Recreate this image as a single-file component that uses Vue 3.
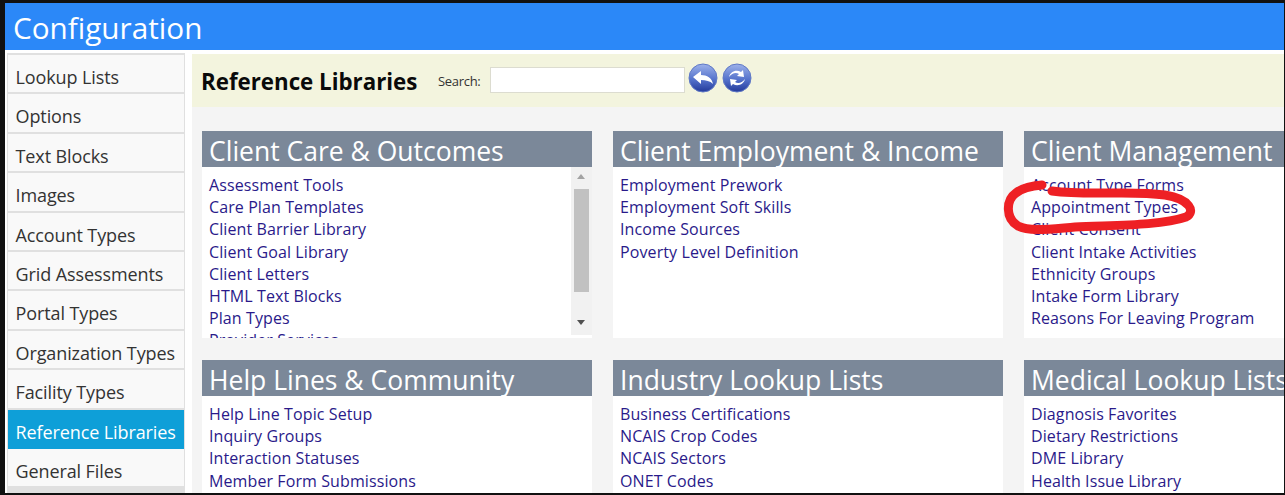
<script setup>
const nav = ['Lookup Lists','Options','Text Blocks','Images','Account Types','Grid Assessments','Portal Types','Organization Types','Facility Types','Reference Libraries','General Files']
const cards = [
  {t:'Client Care & Outcomes',scroll:true,l:['Assessment Tools','Care Plan Templates','Client Barrier Library','Client Goal Library','Client Letters','HTML Text Blocks','Plan Types','Provider Services']},
  {t:'Client Employment & Income',l:['Employment Prework','Employment Soft Skills','Income Sources','Poverty Level Definition']},
  {t:'Client Management',l:['Account Type Forms','Appointment Types','Client Consent','Client Intake Activities','Ethnicity Groups','Intake Form Library','Reasons For Leaving Program']},
  {t:'Help Lines & Community',l:['Help Line Topic Setup','Inquiry Groups','Interaction Statuses','Member Form Submissions']},
  {t:'Industry Lookup Lists',l:['Business Certifications','NCAIS Crop Codes','NCAIS Sectors','ONET Codes']},
  {t:'Medical Lookup Lists',l:['Diagnosis Favorites','Dietary Restrictions','DME Library','Health Issue Library']},
]
</script>

<template>
  <div class="frame">
    <header class="title">Configuration</header>
    <div class="body">
      <nav class="side">
        <a v-for="n in nav" :key="n" class="item" :class="{on:n==='Reference Libraries'}">{{ n }}</a>
      </nav>
      <main class="main">
        <div class="bar">
          <h1>Reference Libraries</h1>
          <label>Search:</label>
          <input class="search" type="text" />
          <svg class="btn" viewBox="0 0 30 30"><defs><linearGradient id="g" x1="0" y1="0" x2="0" y2="1"><stop offset="0" stop-color="#9db2ea"/><stop offset=".55" stop-color="#5573cc"/><stop offset="1" stop-color="#23399a"/></linearGradient></defs><circle cx="15" cy="15" r="14" fill="url(#g)" stroke="#6079c6"/><path d="M5 14l8-6v4c6 0 11 3 12 9-3-3-7-4-12-4v4z" fill="#fff"/></svg>
          <svg class="btn" viewBox="0 0 30 30"><circle cx="15" cy="15" r="14" fill="url(#g)" stroke="#6079c6"/><path d="M7 14c1-5 7-8 12-5l2-2 1 7-7-1 2-2c-3-2-7-1-10 3zM23 16c-1 5-7 8-12 5l-2 2-1-7 7 1-2 2c3 2 7 1 10-3z" fill="#fff"/></svg>
        </div>
        <div class="grid">
          <section v-for="c in cards" :key="c.t" class="card">
            <h2>{{ c.t }}</h2>
            <div class="list">
              <a v-for="x in c.l" :key="x">{{ x }}</a>
              <div v-if="c.scroll" class="sb"><i class="up"></i><b></b><i class="down"></i></div>
            </div>
          </section>
        </div>
      </main>
    </div>
    <svg class="mark" viewBox="0 0 1285 495" width="1285" height="495"><path d="M1052 191C1090 196 1130 190 1165 195C1190 199 1196 212 1186 217C1160 226 1110 225 1075 227C1050 229 1030 232 1018 226C1005 218 1006 200 1016 193C1022 188 1032 186 1042 185" fill="none" stroke="#ee2024" stroke-width="9" stroke-linecap="round"/></svg>
  </div>
</template>

<style>
html,body{margin:0;background:#000;overflow:hidden}
</style>
<style scoped>
.frame{position:relative;width:1285px;height:495px;box-sizing:border-box;padding:3px 1px 2px 5px;background:#111;font-family:"Open Sans","Noto Sans",sans-serif;overflow:hidden;display:flex;flex-direction:column}
.title{height:47px;flex:none;background:#2b88f8;color:#fff;font-size:29.7px;line-height:50px;padding-left:8px}
.body{flex:1;display:flex;background:#fff;min-height:0;overflow:hidden}
.side{width:178px;flex:none;margin:3px 7px 0 2px;padding:2px 1px 0;box-sizing:border-box;background:#e0e0e0}
.item{display:block;height:37.4px;margin-bottom:2px;background:#f9f9f9;box-sizing:border-box;padding-left:7.5px;font-size:18px;line-height:44px;color:#333;letter-spacing:-.1px;white-space:nowrap}
.item.on{background:#0e9fd8;color:#fff;box-shadow:0 2px 0 #0e9fd8}
.main{flex:1;min-width:0;margin-top:4px;background:#f4f4f4;overflow:hidden}
.bar{height:53px;background:#f3f4de;display:flex;align-items:center;padding-left:9px}
h1{margin:1px 0 0;font-size:22.3px;font-weight:700;color:#0a0a0a;width:237px;white-space:nowrap}
label{font-size:13px;color:#333;width:52px;letter-spacing:-.3px}
.search{width:195px;height:26px;box-sizing:border-box;border:1px solid #dcdcd0;background:#fff;margin:0 3px 2px 0;padding:0}
.btn{width:30px;height:30px;margin:0 4px 5px 0}
.grid{display:grid;grid-template-columns:repeat(3,390px);gap:22px 21px;padding:24px 0 0 10px}
.card{width:390px}
h2{margin:0;height:36px;background:#7b8899;color:#fff;font-size:26.5px;font-weight:400;line-height:40px;padding-left:7px;white-space:nowrap;box-sizing:border-box}
.list{position:relative;height:171px;background:#fff;padding:7px 0 0 7px;box-sizing:border-box;overflow:hidden}
.list a{display:block;height:22.2px;font-size:16px;line-height:22px;color:#2a1a8a;letter-spacing:.1px;white-space:nowrap}
.sb{position:absolute;top:0;right:0;width:21px;bottom:3px;background:#f1f1f1}
.sb b{position:absolute;left:3px;right:3px;top:22px;height:103px;background:#c1c1c1}
.up,.down{position:absolute;left:6px;width:0;height:0;border:4.5px solid transparent}
.up{top:7px;border-bottom:5px solid #a3a3a3;border-top:0}
.down{bottom:10px;border-top:5px solid #505050;border-bottom:0}
.mark{position:absolute;left:0;top:0;pointer-events:none}
</style>
